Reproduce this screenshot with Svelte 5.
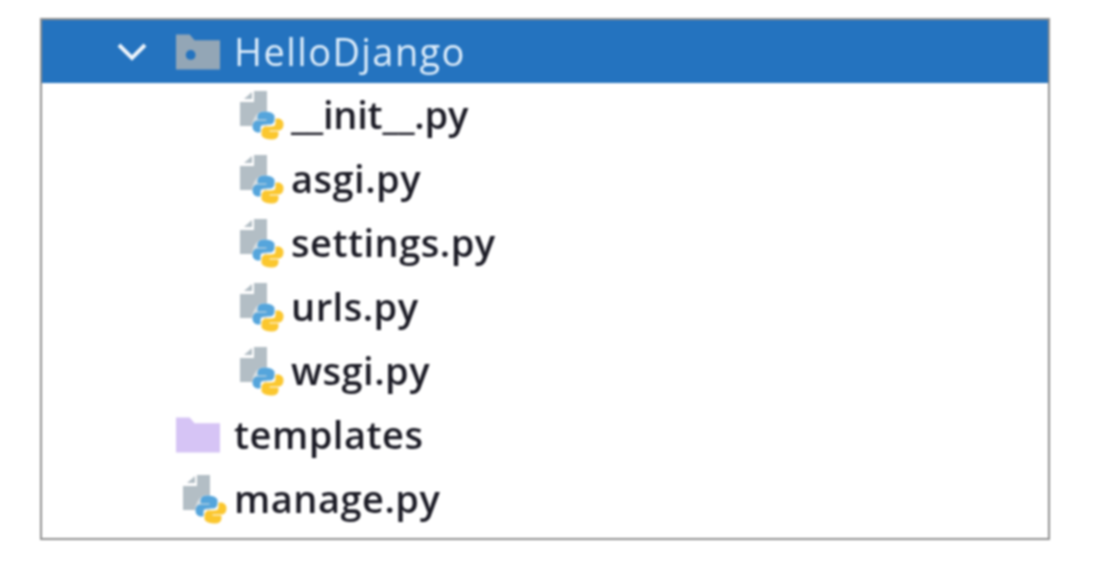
<script>
  const children = [
    { name: '__init__.py', tight: true },
    { name: 'asgi.py', tight: false },
    { name: 'settings.py', tight: false },
    { name: 'urls.py', tight: false },
    { name: 'wsgi.py', tight: false }
  ];
</script>

{#snippet pyIcon()}
  <svg class="py" viewBox="0 0 44 50" aria-hidden="true">
    <path class="doc" d="M4 8 L12 1 V8 Z" />
    <path class="doc" d="M0 11 H14 V0 H27 V35 H0 Z" />
    <path class="halo" d="M24 20 C17 20 12 28 12 36 C12 42 18 48 32 48 L44 33 C44 25 34 20 24 20 Z" />
    <path class="blue" d="M24 21 C18 21 18 24 18 28 H27 V30 H17 C14 30 13 33 13 36 C13 39 15 41 18 41 H20 V37 C20 34 22 33 25 33 H30 C33 33 34 31 34 28 V25 C34 23 30 21 24 21 Z" />
    <path class="yellow" d="M32 48 C38 48 38 45 38 41 H29 V39 H39 C42 39 43 36 43 33 C43 30 41 28 38 28 H36 V32 C36 35 34 36 31 36 H26 C23 36 22 38 22 41 V44 C22 46 26 48 32 48 Z" />
  </svg>
{/snippet}

<div class="page">
  <div class="tree">
    <div class="row selected">
      <svg class="chevron" viewBox="0 0 30 20" aria-hidden="true"><path d="M2 3 L15 16 L28 3" /></svg>
      <svg class="folder" viewBox="0 0 45 36" aria-hidden="true">
        <path class="pkg" d="M0 0 H14 L19 6 H45 V36 H0 Z" />
        <circle class="dot" cx="15" cy="21" r="5" />
      </svg>
      <span>HelloDjango</span>
    </div>
    {#each children as item}
      <div class="row file" class:tight={item.tight}>
        {@render pyIcon()}
        <span>{item.name}</span>
      </div>
    {/each}
    <div class="row top">
      <svg class="folder" viewBox="0 0 45 36" aria-hidden="true">
        <path class="tpl" d="M0 0 H14 L19 6 H45 V36 H0 Z" />
      </svg>
      <span>templates</span>
    </div>
    <div class="row manage">
      {@render pyIcon()}
      <span>manage.py</span>
    </div>
  </div>
</div>

<style>
  :global(body) { margin: 0; background: #fff; }
  .page {
    width: 1100px;
    height: 577px;
    padding: 18px 0 0 40px;
    box-sizing: border-box;
    overflow: hidden;
  }
  .tree {
    width: 1010px;
    height: 522px;
    box-sizing: border-box;
    border: 2px solid #8f8f8f;
    background: #fff;
    filter: blur(0.9px);
    font-family: "Open Sans", "Noto Sans", sans-serif;
    font-size: 38px;
    font-weight: 550;
    letter-spacing: 0.5px;
    color: #1c1c26;
  }
  .row {
    height: 64px;
    display: flex;
    align-items: center;
    box-sizing: border-box;
  }
  .row span { position: relative; top: -1px; }
  .selected {
    height: 63px;
    background: #2473bf;
    color: #dcecfa;
    padding-left: 75px;
    font-weight: 500;
    letter-spacing: 1.4px;
  }
  .tight { letter-spacing: -0.2px; }
  .chevron { width: 30px; height: 20px; margin-right: 29px; }
  .chevron path { fill: none; stroke: #eef5fb; stroke-width: 4; }
  .folder { width: 44px; height: 36px; margin-right: 14px; flex: none; }
  .pkg { fill: #93a6b6; }
  .dot { fill: #2473bf; }
  .tpl { fill: #d6c4f5; }
  .py { width: 44px; height: 50px; flex: none; margin-right: 7px; position: relative; top: 1px; }
  .doc { fill: #b3bec5; }
  .halo { fill: #fff; opacity: 0.5; }
  .blue { fill: #55a5dc; stroke: #55a5dc; stroke-width: 1; }
  .yellow { fill: #fbc72e; stroke: #fbc72e; stroke-width: 1; }
  .file { padding-left: 198px; }
  .top { padding-left: 134px; }
  .manage { padding-left: 141px; }
  .manage .py { margin-right: 7px; }
</style>
